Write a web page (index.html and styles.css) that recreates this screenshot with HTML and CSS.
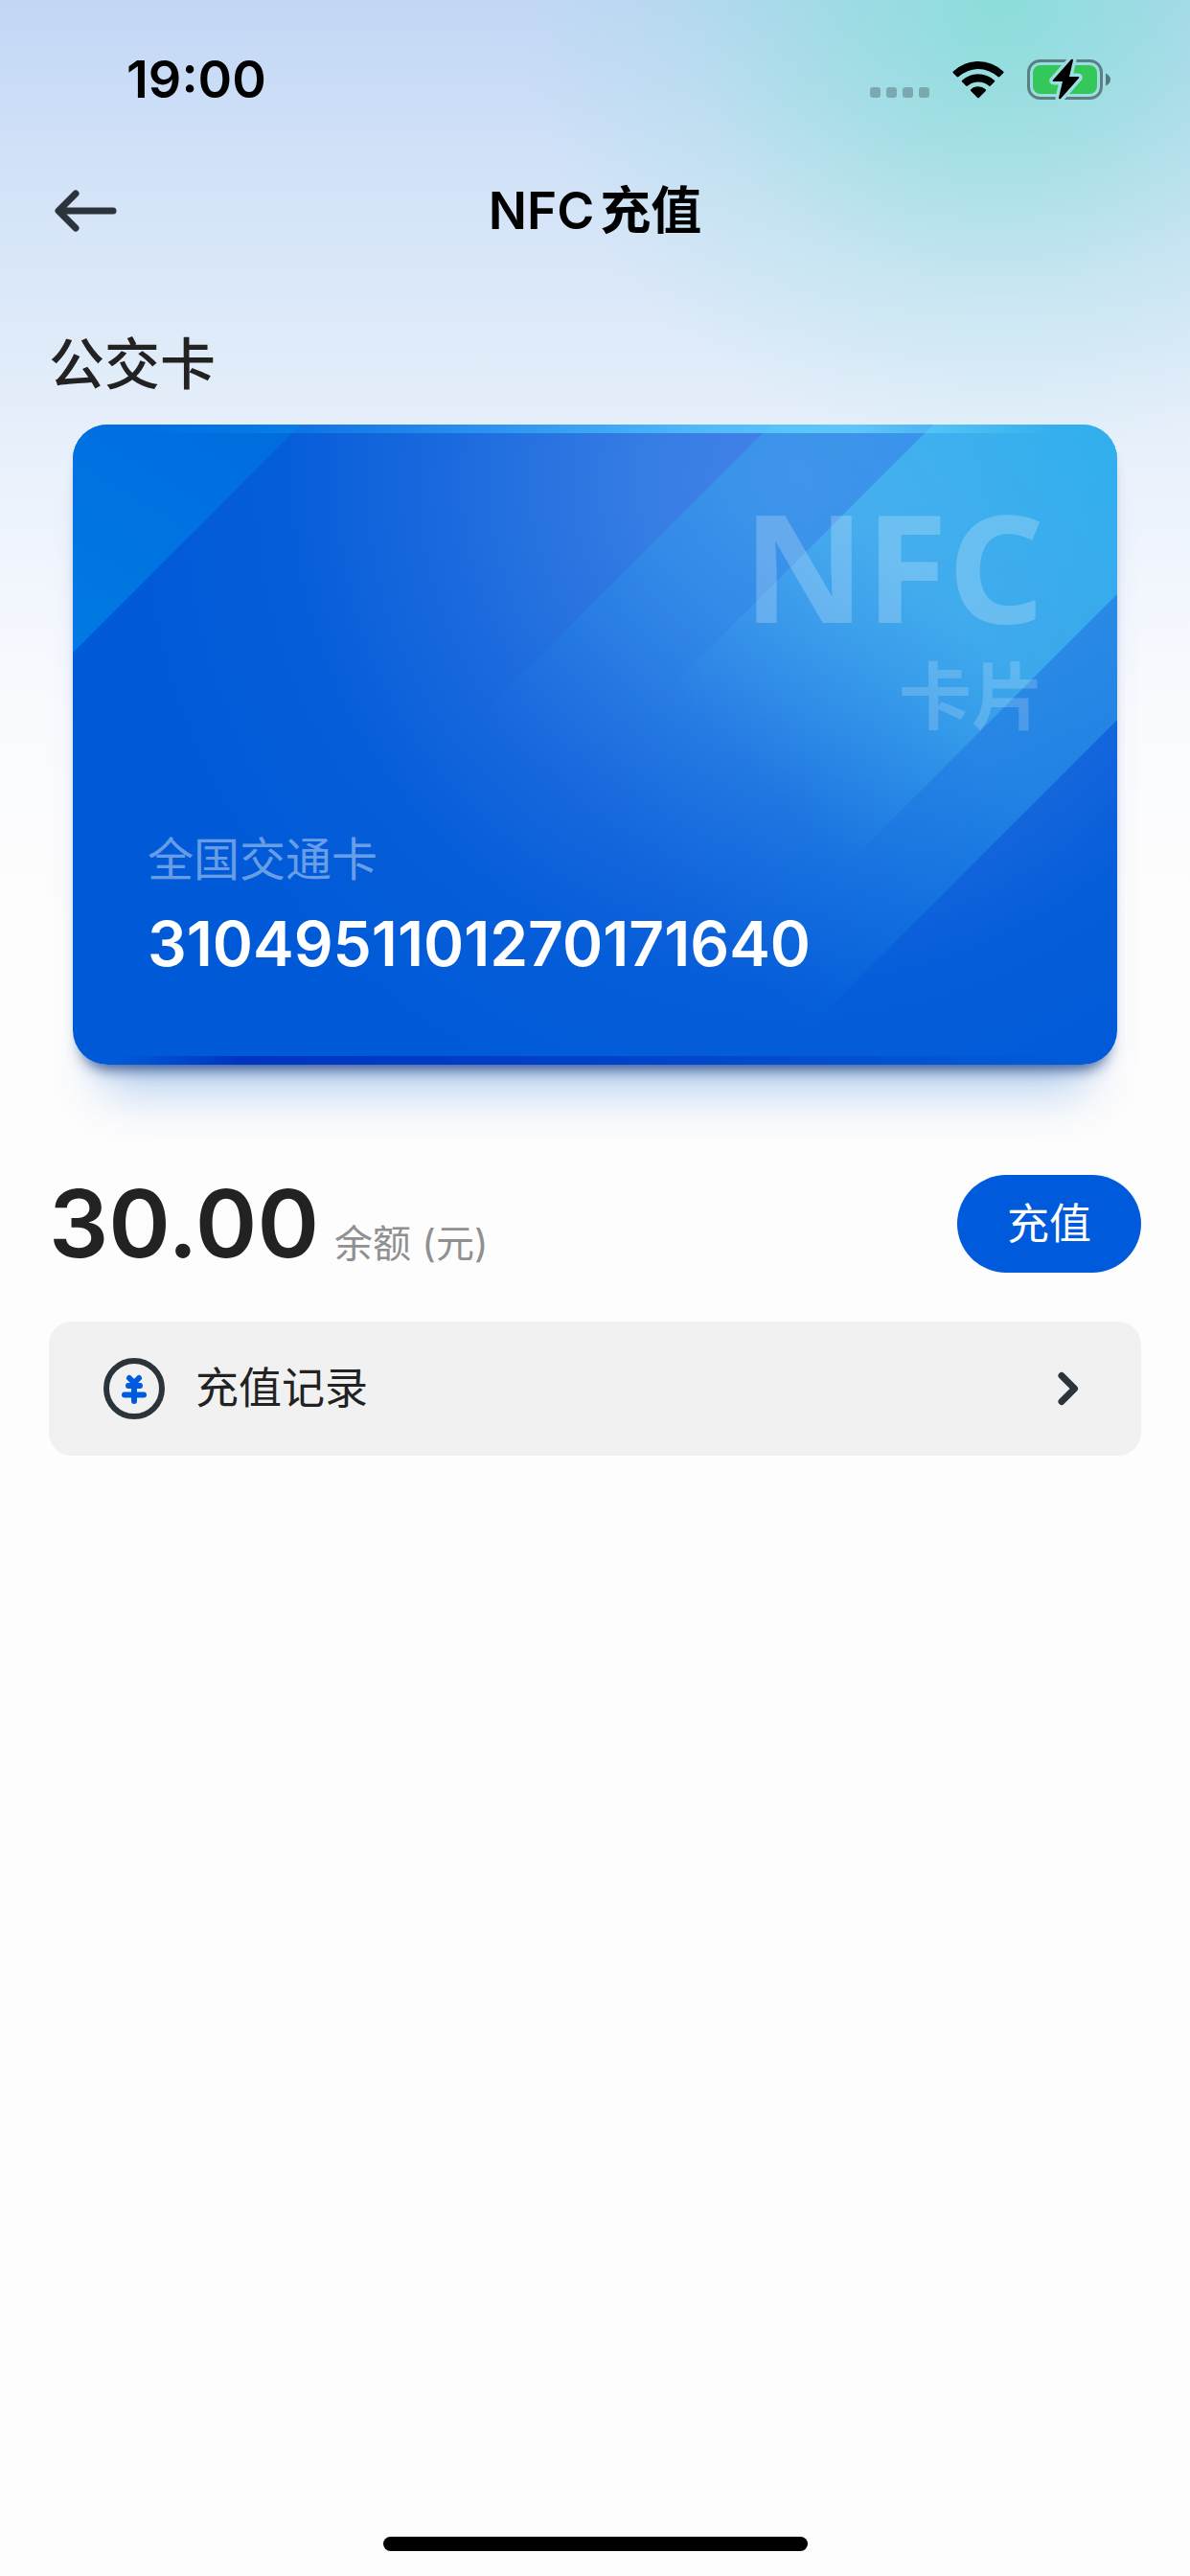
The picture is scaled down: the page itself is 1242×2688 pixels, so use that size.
FILE: index.html
```html
<!DOCTYPE html>
<html lang="zh-CN">
<head>
<meta charset="utf-8">
<meta name="viewport" content="width=device-width, initial-scale=1">
<title>NFC充值</title>
<link rel="stylesheet" href="styles.css">
</head>
<body>
<div class="screen">
  <div class="status-bar">
    <span class="clock">19:00</span>
    <div class="status-icons">
      <svg class="signal" width="62" height="12" viewBox="0 0 62 12" aria-hidden="true">
        <rect width="11" height="11" rx="3"/><rect x="17" width="11" height="11" rx="3"/><rect x="34" width="11" height="11" rx="3"/><rect x="51" width="11" height="11" rx="3"/>
      </svg>
      <svg width="54" height="40" viewBox="0 0 54 40" aria-hidden="true">
        <path d="M.9 11.4Q0 12.4.9 13.3L4.600 17Q5.500 17.900 6.500 17A30.500 30.500 0 0 1 47.500 17Q48.500 17.900 49.400 17L53.100 13.300Q54 12.400 53.100 11.400A38 38 0 0 0 .9 11.400Z"/>
        <path d="M10.200 20.800Q9.300 21.700 10.200 22.600L14.100 26.500Q15 27.300 16 26.500A17 17 0 0 1 38 26.500Q39 27.300 39.900 26.500L43.800 22.600Q44.700 21.700 43.800 20.800A25 25 0 0 0 10.200 20.800Z"/>
        <path d="M19.300 30.200Q18.500 31.100 19.300 32L26 38.700Q27 39.700 28 38.700L34.700 32Q35.500 31.100 34.700 30.200A11.500 11.500 0 0 0 19.300 30.200Z"/>
      </svg>
      <svg width="88" height="44" viewBox="0 0 88 44" aria-hidden="true">
        <defs>
          <mask id="bolt-gap">
            <rect width="88" height="44" fill="#fff"/>
            <path d="M46 1L27 22.500Q26 24 28 24H37L33 41Q33 43 35 42L54 20.500Q55 19 53 19H44L48 2Q48 0 46 1Z" stroke="#000" stroke-width="7" stroke-linejoin="round"/>
          </mask>
        </defs>
        <g mask="url(#bolt-gap)">
          <rect x="1.500" y="2.500" width="76" height="39" rx="12" fill="none" stroke="#000" stroke-opacity=".42" stroke-width="3"/>
          <rect x="6" y="7" width="67" height="30" rx="8" fill="#34c759"/>
        </g>
        <path d="M82 15.500Q87 18 87 22T82 28.500Z" fill-opacity=".45"/>
        <path d="M46 1L27 22.500Q26 24 28 24H37L33 41Q33 43 35 42L54 20.500Q55 19 53 19H44L48 2Q48 0 46 1Z"/>
      </svg>
    </div>
  </div>

  <header class="nav-bar">
    <button class="back" type="button" aria-label="返回">
      <svg width="66" height="44" viewBox="0 0 66 44" aria-hidden="true"><path d="M22 4L4 22L22 40M5 22H61"/></svg>
    </button>
    <h1 class="nav-title">NFC<span class="nav-title-han">充值</span></h1>
  </header>

  <main class="content">
    <h2 class="section-title">公交卡</h2>

    <section class="card">
      <svg class="card-art" viewBox="0 0 1090 668" preserveAspectRatio="none" aria-hidden="true">
        <defs>
          <radialGradient id="glow" gradientUnits="userSpaceOnUse" cx="750" cy="60" r="700">
            <stop offset="0" stop-color="#4483e7"/>
            <stop offset=".22" stop-color="#367de4"/>
            <stop offset=".48" stop-color="#1e6cde"/>
            <stop offset=".76" stop-color="#065dd9"/>
            <stop offset="1" stop-color="#005ad8"/>
          </radialGradient>
          <linearGradient id="corner" x1=".6" y1="0" x2="0" y2="1">
            <stop offset="0" stop-color="#006ddf"/>
            <stop offset="1" stop-color="#007ae4"/>
          </linearGradient>
          <linearGradient id="wide-band" gradientUnits="userSpaceOnUse" x1="1108" y1="19" x2="627" y2="500">
            <stop offset="0" stop-color="#41b8f0" stop-opacity=".44"/>
            <stop offset=".5" stop-color="#36b0f0" stop-opacity=".38"/>
            <stop offset="1" stop-color="#18a0f0" stop-opacity="0"/>
          </linearGradient>
          <linearGradient id="inner-band" gradientUnits="userSpaceOnUse" x1="1091" y1="2" x2="720" y2="373">
            <stop offset="0" stop-color="#32c4f2" stop-opacity=".62"/>
            <stop offset=".5" stop-color="#52ccf4" stop-opacity=".46"/>
            <stop offset="1" stop-color="#40b0f0" stop-opacity="0"/>
          </linearGradient>
          <linearGradient id="top-edge">
            <stop offset=".06" stop-color="#10a0ff" stop-opacity="0"/>
            <stop offset=".3" stop-color="#22a0f8" stop-opacity=".5"/>
            <stop offset=".62" stop-color="#58ccff" stop-opacity=".8"/>
            <stop offset=".75" stop-color="#6cdcff" stop-opacity=".7"/>
            <stop offset=".94" stop-color="#6cdcff" stop-opacity="0"/>
          </linearGradient>
          <linearGradient id="bottom-edge">
            <stop offset=".04" stop-color="#0030c0" stop-opacity="0"/>
            <stop offset=".16" stop-color="#0030c0" stop-opacity=".9"/>
            <stop offset=".5" stop-color="#0038c4" stop-opacity=".75"/>
            <stop offset=".95" stop-color="#0038c4" stop-opacity="0"/>
          </linearGradient>
        </defs>
        <rect width="1090" height="668" fill="url(#glow)"/>
        <path d="M0 0H238L0 238Z" fill="url(#corner)"/>
        <path d="M729 0H1090V308L730 668H61Z" fill="url(#wide-band)"/>
        <path d="M898 0H1090V177L599 668H230Z" fill="url(#inner-band)"/>
        <rect width="1090" height="9" fill="url(#top-edge)"/>
        <rect y="659" width="1090" height="9" fill="url(#bottom-edge)"/>
      </svg>
      <div class="card-mark">
        <span class="mark-latin">NFC</span>
        <span class="mark-han">卡片</span>
      </div>
      <div class="card-info">
        <span class="card-type">全国交通卡</span>
        <span class="card-number">3104951101270171640</span>
      </div>
    </section>

    <section class="balance">
      <p class="balance-text"><span class="amount">30.00</span><span class="unit">余额 (元)</span></p>
      <button class="recharge" type="button">充值</button>
    </section>

    <a class="record" href="#records">
      <svg width="64" height="64" viewBox="0 0 64 64" fill="none" stroke-linecap="round" aria-hidden="true">
        <circle cx="32" cy="32" r="29" stroke="#2c343b" stroke-width="6"/>
        <path d="M27 21L32 26L37 21M26 29H38M22 38.500H42M32 28V45" stroke="#005ae0" stroke-width="6" stroke-linejoin="round"/>
      </svg>
      <span class="record-label">充值记录</span>
      <svg class="chevron" width="24" height="36" viewBox="0 0 24 36" aria-hidden="true"><path d="M5 4.500L18.500 18L5 31.500"/></svg>
    </a>
  </main>

  <div class="home-indicator"></div>
</div>
</body>
</html>
```
FILE: styles.css
```css
* { box-sizing: border-box; }

body {
  margin: 0;
  background: #fdfdfd;
  color: #222;
  font-family: Inter, "Noto Sans CJK SC", sans-serif;
}

h1, h2, p { margin: 0; }

button {
  border: 0;
  padding: 0;
  background: none;
  font: inherit;
  cursor: pointer;
}

.screen {
  display: flex;
  flex-direction: column;
  min-height: 100vh;
  background:
    radial-gradient(500px 480px at 84% 0, rgba(130, 222, 215, .85), rgba(130, 222, 215, .58) 30%, rgba(130, 222, 215, .2) 65%, rgba(130, 222, 215, 0)) no-repeat,
    linear-gradient(#c2d7f5, #d2e2f8 180px, #e4eefa 420px, #f0f5fd 580px, #fafbfe 760px, #fdfdfd 960px) no-repeat;
}

.status-bar {
  display: flex;
  align-items: center;
  justify-content: space-between;
  height: 132px;
  padding: 34px 82px 0 132px;
}

.clock {
  color: #000;
  font-size: 54px;
  font-weight: 600;
  line-height: 64px;
}

.status-icons {
  display: flex;
  align-items: center;
  gap: 24px;
}

.signal {
  align-self: flex-end;
  margin-bottom: 2px;
  fill: rgba(70, 90, 95, .4);
}

.nav-bar {
  display: grid;
  grid-template-columns: 1fr auto 1fr;
  align-items: center;
  height: 176px;
  padding: 0 57px;
}

.back { justify-self: start; }

.back svg { display: block; }

.back path,
.chevron path {
  fill: none;
  stroke: #2c343b;
  stroke-width: 7;
  stroke-linecap: round;
  stroke-linejoin: round;
}

.nav-title {
  color: #000;
  font-size: 53px;
  font-weight: 600;
  line-height: 72px;
}

.nav-title-han { margin-left: 6px; }

.content {
  display: flex;
  flex: 1;
  flex-direction: column;
  padding: 32px 51px;
}

.section-title {
  font-size: 58px;
  font-weight: 500;
  line-height: 80px;
}

.card {
  position: relative;
  display: flex;
  flex-direction: column;
  justify-content: space-between;
  aspect-ratio: 1090 / 668;
  margin: 23px 25px 0;
  padding: 66px 76px 82px 78px;
  border-radius: 36px;
  box-shadow:
    0 14px 16px -10px rgba(8, 46, 110, .8),
    0 58px 52px -32px rgba(0, 90, 210, .3);
}

.card-art {
  position: absolute;
  inset: 0;
  width: 100%;
  height: 100%;
  border-radius: inherit;
}

.card-mark,
.card-info {
  position: relative;
  display: flex;
  flex-direction: column;
}

.card-mark {
  align-items: flex-end;
  color: rgba(255, 255, 255, .22);
  font-weight: 700;
}

.mark-latin {
  font-family: "Noto Sans", sans-serif;
  font-size: 157px;
  line-height: 160px;
}

.mark-han {
  color: rgba(255, 255, 255, .18);
  font-size: 76px;
  line-height: 116px;
}

.card-info {
  gap: 4px;
  color: #fff;
}

.card-type {
  color: rgba(255, 255, 255, .42);
  font-size: 48px;
  font-weight: 400;
  line-height: 80px;
}

.card-number {
  font-size: 64px;
  font-weight: 600;
  line-height: 88px;
}

.balance {
  display: flex;
  align-items: center;
  justify-content: space-between;
  margin-top: 115px;
}

.balance-text {
  display: flex;
  align-items: baseline;
  gap: 16px;
}

.amount {
  font-size: 98px;
  font-weight: 600;
  line-height: 102px;
}

.unit {
  color: #909090;
  font-size: 40px;
  font-weight: 400;
  line-height: 48px;
}

.recharge {
  padding: 20px 52px;
  border-radius: 52px;
  background: #005adc;
  color: #fff;
  font-size: 44px;
  font-weight: 400;
  line-height: 62px;
}

.record {
  display: flex;
  align-items: center;
  margin-top: 51px;
  padding: 38px 64px 38px 57px;
  border-radius: 24px;
  background: #f1f1f1;
  color: #222;
  text-decoration: none;
}

.record-label {
  flex: 1;
  margin-left: 32px;
  font-size: 45px;
  line-height: 64px;
}

.home-indicator {
  align-self: center;
  width: 443px;
  height: 15px;
  margin-bottom: 26px;
  border-radius: 8px;
  background: #000;
}
```
